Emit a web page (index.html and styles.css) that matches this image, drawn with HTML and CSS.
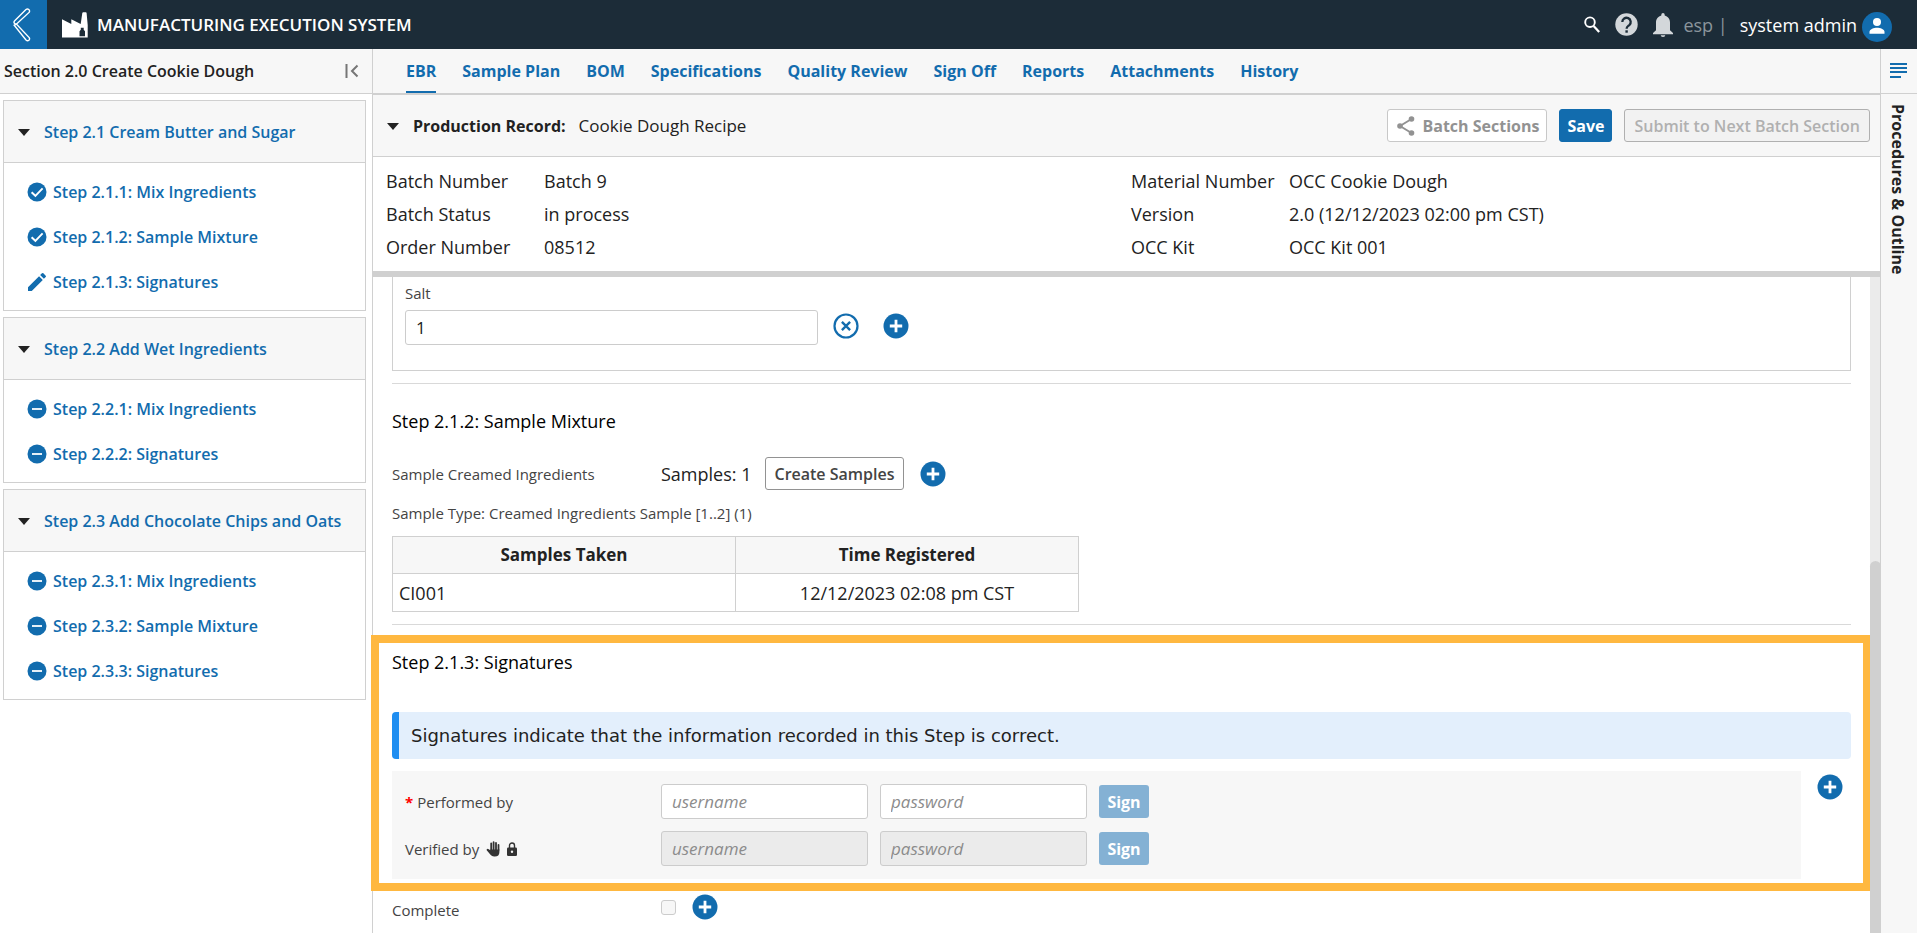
FILE: index.html
```html
<!DOCTYPE html>
<html lang="en">
<head>
<meta charset="utf-8">
<title>Manufacturing Execution System</title>
<link rel="stylesheet" href="styles.css">
</head>
<body>
<svg class="defs" width="0" height="0" aria-hidden="true">
  <symbol id="i-check" viewBox="0 0 20 20"><circle cx="10" cy="10" r="9.5" fill="currentColor"/><path d="M4.6 10.2 8.4 13.8 15.6 6.4" fill="none" stroke="#fff" stroke-width="1.9"/></symbol>
  <symbol id="i-minus" viewBox="0 0 20 20"><circle cx="10" cy="10" r="9.5" fill="currentColor"/><path d="M5 10h10" stroke="#fff" stroke-width="1.8"/></symbol>
  <symbol id="i-pencil" viewBox="2 2 20 20"><path fill="currentColor" d="M3 17.250V21h3.750L17.810 9.940l-3.750-3.750L3 17.250zM20.710 7.040a1 1 0 0 0 0-1.410l-2.340-2.340a1 1 0 0 0-1.410 0l-1.830 1.830 3.750 3.750 1.830-1.830z"/></symbol>
  <symbol id="i-plus" viewBox="0 0 26 26"><circle cx="13" cy="13" r="12.500" fill="currentColor"/><path d="M13 6.800v12.400M6.800 13h12.400" stroke="#fff" stroke-width="2.800"/></symbol>
  <symbol id="i-cancel" viewBox="0 0 26 26"><circle cx="13" cy="13" r="11.500" fill="none" stroke="currentColor" stroke-width="2.200"/><path d="M8.900 8.900l8.200 8.200M17.100 8.900l-8.200 8.200" stroke="currentColor" stroke-width="2.400"/></symbol>
  <symbol id="i-caret" viewBox="0 0 12 9"><path fill="currentColor" d="M0 2h12L6 9z"/></symbol>
</svg>
<header class="topbar">
  <button class="back" aria-label="Back"><svg width="18" height="34" viewBox="0 0 18 34" fill="none" stroke="#fff" stroke-width="1.400"><path d="M13 1.500 1.700 12.700Q.300 14.200 1.700 15.600L3.300 16.200 16.300 4.200Q17 2.500 15.800 1.500 14.400.400 13 1.500z"/><path d="M3.300 16.200 1.200 17.200 13 32Q14.500 33.300 15.900 32.200 17.100 31 16.200 29.600L4.300 17z"/></svg></button>
  <svg class="logo" width="26" height="26" viewBox="0 0 26 26"><path fill="#fff" d="M0 25.500V7.200L9.300 12V7.200L18.700 12 20.300 1Q20.500.300 21.200.300h2.600q.700 0 .8.700L25.700 13v12.500zM18.800 15.700v2l-1.300 1.500v5h5.500v-5l-1.300-1.500v-2z"/></svg>
  <h1 class="title">MANUFACTURING EXECUTION SYSTEM</h1>
  <div class="tools">
    <button class="tool" aria-label="Search"><svg width="16" height="17" viewBox="0 0 16 17" fill="none" stroke="#fff"><circle cx="6" cy="6.200" r="4.800" stroke-width="1.900"/><path d="M9.600 10l5.600 6" stroke-width="2.300"/></svg></button>
    <button class="tool" aria-label="Help"><svg width="23" height="23" viewBox="0 0 23 23"><circle cx="11.500" cy="11.500" r="11.200" fill="#d3d7da"/><path d="M7.300 9a4.200 4.200 0 1 1 7 3.100c-1.500 1.200-2.700 1.700-2.700 3.600" fill="none" stroke="#1c2c38" stroke-width="2.300"/><path d="M10.400 17.300h2.400v2.400h-2.400z" fill="#1c2c38"/></svg></button>
    <button class="tool" aria-label="Notifications"><svg width="20" height="24" viewBox="0 0 20 24"><path fill="#d3d7da" d="M10 0a1.700 1.700 0 0 1 1.700 1.700v.9c3.200.8 5.300 3.500 5.300 7V17.300l3 2.700v1.200H0V20l3-2.700V9.600c0-3.500 2.100-6.200 5.300-7v-.9A1.700 1.700 0 0 1 10 0zM7.700 22.200h4.600A2.300 1.800 0 0 1 7.700 22.200z"/></svg></button>
    <span class="locale">esp |</span>
    <button class="user">system admin
      <svg width="30" height="30" viewBox="0 0 30 30"><circle cx="15" cy="15" r="15" fill="#126cae"/><circle cx="15" cy="10" r="4" fill="#fff"/><path d="M7.500 21.800v-2c0-2.600 4.500-4.100 7.500-4.100s7.500 1.500 7.500 4.100v2z" fill="#fff"/></svg>
    </button>
  </div>
</header>

<div class="shell">
  <aside class="sidebar">
    <div class="side-head"><h2>Section 2.0 Create Cookie Dough</h2>
      <button class="plain" aria-label="Collapse sidebar"><svg width="14" height="14" viewBox="0 0 14 14" fill="none" stroke="#767676" stroke-width="2"><path d="M1.500 0v14M12.500 1.500 7 7l5.500 5.500"/></svg></button></div>
    <nav class="steps" aria-label="Steps">
      <section class="panel">
        <h3><svg class="caret"><use href="#i-caret"/></svg><a href="#">Step 2.1 Cream Butter and Sugar</a></h3>
        <ul>
          <li><svg class="ic"><use href="#i-check"/></svg><a href="#">Step 2.1.1: Mix Ingredients</a></li>
          <li><svg class="ic"><use href="#i-check"/></svg><a href="#">Step 2.1.2: Sample Mixture</a></li>
          <li><svg class="ic"><use href="#i-pencil"/></svg><a href="#">Step 2.1.3: Signatures</a></li>
        </ul>
      </section>
      <section class="panel">
        <h3><svg class="caret"><use href="#i-caret"/></svg><a href="#">Step 2.2 Add Wet Ingredients</a></h3>
        <ul>
          <li><svg class="ic"><use href="#i-minus"/></svg><a href="#">Step 2.2.1: Mix Ingredients</a></li>
          <li><svg class="ic"><use href="#i-minus"/></svg><a href="#">Step 2.2.2: Signatures</a></li>
        </ul>
      </section>
      <section class="panel">
        <h3><svg class="caret"><use href="#i-caret"/></svg><a href="#">Step 2.3 Add Chocolate Chips and Oats</a></h3>
        <ul>
          <li><svg class="ic"><use href="#i-minus"/></svg><a href="#">Step 2.3.1: Mix Ingredients</a></li>
          <li><svg class="ic"><use href="#i-minus"/></svg><a href="#">Step 2.3.2: Sample Mixture</a></li>
          <li><svg class="ic"><use href="#i-minus"/></svg><a href="#">Step 2.3.3: Signatures</a></li>
        </ul>
      </section>
    </nav>
  </aside>

  <main class="main">
    <nav class="tabs" aria-label="Record">
      <a class="active" href="#">EBR</a><a href="#">Sample Plan</a><a href="#">BOM</a><a href="#">Specifications</a><a href="#">Quality Review</a><a href="#">Sign Off</a><a href="#">Reports</a><a href="#">Attachments</a><a href="#">History</a>
    </nav>
    <div class="record-head">
      <svg class="caret"><use href="#i-caret"/></svg>
      <h2>Production Record:</h2><span class="recipe">Cookie Dough Recipe</span>
      <div class="actions">
        <button class="btn share"><svg width="18" height="20" viewBox="0 0 18 20" fill="#929292"><path d="M14.500 3 3 10l11.500 7" fill="none" stroke="#929292" stroke-width="1.900"/><circle cx="14.500" cy="3" r="2.800"/><circle cx="3" cy="10" r="2.800"/><circle cx="14.500" cy="17" r="2.800"/></svg>Batch Sections</button>
        <button class="btn primary">Save</button>
        <button class="btn submit" disabled>Submit to Next Batch Section</button>
      </div>
    </div>
    <div class="details">
      <dl><dt>Batch Number</dt><dd>Batch 9</dd><dt>Batch Status</dt><dd>in process</dd><dt>Order Number</dt><dd>08512</dd></dl>
      <dl><dt>Material Number</dt><dd>OCC Cookie Dough</dd><dt>Version</dt><dd>2.0 (12/12/2023 02:00 pm CST)</dd><dt>OCC Kit</dt><dd>OCC Kit 001</dd></dl>
    </div>
    <div class="scroller">
      <div class="content">
        <div class="ingredient">
          <label for="salt">Salt</label>
          <div class="salt-row">
            <input id="salt" class="field" type="text" value="1">
            <button class="round" aria-label="Not applicable"><svg><use href="#i-cancel"/></svg></button>
            <button class="round" aria-label="Add note to Salt"><svg><use href="#i-plus"/></svg></button>
          </div>
        </div>
        <section class="step sample">
          <h3>Step 2.1.2: Sample Mixture</h3>
          <div class="form-row">
            <span class="label">Sample Creamed Ingredients</span>
            <span class="count">Samples: 1</span>
            <button class="btn create">Create Samples</button>
            <button class="round" aria-label="Add note to samples"><svg><use href="#i-plus"/></svg></button>
          </div>
          <p class="type">Sample Type: Creamed Ingredients Sample [1..2] (1)</p>
          <table class="samples">
            <thead><tr><th>Samples Taken</th><th>Time Registered</th></tr></thead>
            <tbody><tr><td>CI001</td><td class="time">12/12/2023 02:08 pm CST</td></tr></tbody>
          </table>
        </section>
        <section class="step signatures">
          <h3>Step 2.1.3: Signatures</h3>
          <p class="notice">Signatures indicate that the information recorded in this Step is correct.</p>
          <div class="sign-area">
            <div class="sign-box">
              <div class="sign-row">
                <span class="label required"><span class="req">*</span> Performed by</span>
                <input class="field" type="text" placeholder="username" aria-label="Performed by username">
                <input class="field" type="password" placeholder="password" aria-label="Performed by password">
                <button class="btn sign" disabled>Sign</button>
              </div>
              <div class="sign-row">
                <span class="label">Verified by
                  <svg class="hand" width="14" height="16" viewBox="0 0 14 16" fill="none" stroke="#333" stroke-linecap="round"><path d="M5.200 9V2.300M7.600 9V1.200M10 9V2M12.500 9V4" stroke-width="1.800"/><path d="M4.300 8.500h9.100V11q0 4.600-4.600 4.600H8q-2.200 0-3.500-1.800L.700 9.200q-.500-.9.500-1.300.8-.2 1.500.3l1.600 1z" fill="#333" stroke="none"/></svg>
                  <svg width="10" height="14" viewBox="0 0 10 14"><path d="M2.500 6V3.500a2.500 2.500 0 0 1 5 0V6" fill="none" stroke="#333" stroke-width="1.400"/><rect y="5.500" width="10" height="8.500" rx="1.200" fill="#333"/><circle cx="5" cy="9.700" r="1.200" fill="#f7f7f7"/></svg>
                </span>
                <input class="field" type="text" placeholder="username" aria-label="Verified by username" disabled>
                <input class="field" type="password" placeholder="password" aria-label="Verified by password" disabled>
                <button class="btn sign" disabled>Sign</button>
              </div>
            </div>
            <button class="round" aria-label="Add note to signatures"><svg><use href="#i-plus"/></svg></button>
          </div>
        </section>
        <div class="complete">
          <label class="label" for="complete">Complete</label>
          <input id="complete" type="checkbox" disabled>
          <button class="round" aria-label="Add note to completion"><svg><use href="#i-plus"/></svg></button>
        </div>
      </div>
      <div class="track" aria-hidden="true"><div class="thumb"></div></div>
    </div>
  </main>

  <aside class="rail">
    <button class="rail-icon" aria-label="Open outline"><svg width="17" height="16" viewBox="0 0 17 16" stroke="#126cae" stroke-width="2"><path d="M0 1h17M0 5h17M0 9h17M0 14h11"/></svg></button>
    <span class="rail-text">Procedures &amp; Outline</span>
  </aside>
</div>
</body>
</html>
```
FILE: styles.css
```css
* { box-sizing: border-box; }
body {
  margin: 0;
  height: 100vh;
  display: flex;
  flex-direction: column;
  overflow: hidden;
  background: #fff;
  color: #222;
  font: 18px/24px "Open Sans", "Noto Sans", sans-serif;
}
h1, h2, h3, p, ul, dl, dd { margin: 0; padding: 0; }
h1, h2, h3 { font-size: 16px; font-weight: 600; }
a { color: #126cae; text-decoration: none; }
button, input { font: inherit; color: inherit; margin: 0; }
button { padding: 0; border: 0; background: none; }
svg { display: block; flex: none; }
.defs { position: absolute; }

.topbar { display: flex; align-items: center; height: 49px; flex: none; background: #1c2c38; color: #fff; }
.back { width: 47px; flex: none; height: 100%; padding-left: 13px; background: #126cae; }
.logo { margin-left: 15px; }
.title { margin-left: 9px; font-size: 17px; }
.tools { display: flex; align-items: center; margin-left: auto; padding-right: 25px; }
.tool { margin-right: 15px; }
.locale { color: #8b959c; margin-left: -5px; }
.user { display: flex; align-items: center; gap: 5px; margin-left: 12px; font-weight: 500; }
.user svg { margin-top: 4px; }

.shell { display: flex; flex: 1; min-height: 0; }
.sidebar { width: 373px; flex: none; border-right: 1px solid #d0d0d0; }
.side-head { display: flex; align-items: center; justify-content: space-between; height: 45px; padding: 0 13px 0 4px; background: #f7f7f7; border-bottom: 1px solid #d0d0d0; }
.steps { display: flex; flex-direction: column; gap: 6px; padding: 6px 6px 6px 3px; }
.panel { border: 1px solid #d0d0d0; }
.panel h3 { display: flex; align-items: center; gap: 14px; height: 62px; padding-left: 14px; background: #f7f7f7; border-bottom: 1px solid #d0d0d0; }
.caret { width: 12px; height: 9px; color: #222; }
.panel ul { list-style: none; padding: 6px 0 6px 23px; }
.panel li { display: flex; align-items: center; gap: 6px; height: 45px; font-size: 16px; font-weight: 600; }
.ic { width: 20px; height: 20px; color: #126cae; }

.main { flex: 1; min-width: 0; display: flex; flex-direction: column; }
.tabs { display: flex; gap: 26px; height: 46px; flex: none; padding-left: 33px; background: #f7f7f7; border-bottom: 2px solid #d0d0d0; font-size: 16px; font-weight: 700; }
.tabs a { padding-top: 10px; }
.tabs .active { border-bottom: 2px solid #126cae; }
.record-head { display: flex; align-items: center; height: 62px; flex: none; padding: 0 10px 0 14px; background: #f7f7f7; border-bottom: 1px solid #d0d0d0; font-size: 17px; }
.record-head h2 { margin-left: 14px; font-weight: 700; }
.recipe { margin-left: 13px; font-weight: 500; }
.actions { display: flex; gap: 12px; margin-left: auto; }
.btn { height: 33px; padding: 0 8px; border: 1px solid #929292; border-radius: 3px; background: #fff; font-size: 16px; font-weight: 600; white-space: nowrap; }
.share { display: flex; align-items: center; gap: 7px; padding: 0 7px 0 9px; color: #929292; border-color: #c8c8c8; font-weight: 700; }
.primary { padding: 0 7px; color: #fff; background: #126cae; border-color: #126cae; font-weight: 700; }
.submit { padding: 0 9px; color: #b0b0b0; background: #f2f2f2; border-color: #b0b0b0; }
.details { display: grid; grid-template-columns: 1fr 1fr; flex: none; padding: 8px 4px 7px 13px; border-bottom: 6px solid #d0d0d0; }
.details dl { display: grid; grid-template-columns: 158px 1fr; line-height: 33px; }

.scroller { display: flex; flex: 1; min-height: 0; }
.content { flex: 1; min-width: 0; padding: 0 19px; }
.track { width: 10px; background: #ebebeb; }
.thumb { width: 11px; height: 60%; margin-top: 284px; border-radius: 6px 6px 0 0; background: #d0d0d0; position: relative; }
.label, .ingredient label, .type { font-size: 15px; color: #444; }
.field { height: 35px; padding: 0 10px; border: 1px solid #ccc; border-radius: 3px; background: #fff; font-size: 17px; }
.field::placeholder { color: #8c8c8c; font-style: italic; opacity: 1; }
.field:disabled { background: #ebebeb; }
.round { width: 26px; height: 26px; color: #126cae; flex: none; }
.round svg { width: 26px; height: 26px; }
.ingredient { height: 94px; padding: 4px 12px 0; border: 1px solid #d0d0d0; border-top: 0; }
.ingredient label { display: block; height: 29px; }
.salt-row { display: flex; align-items: flex-start; }
.salt-row .field { width: 413px; margin-right: 15px; }
.salt-row .round { margin-right: 24px; margin-top: 3px; }
.step h3 { font-weight: 400; color: #000; font-size: 18px; }
.sample { margin-top: 12px; padding: 25px 0 12px; border-top: 1px solid #d9d9d9; border-bottom: 1px solid #d9d9d9; }
.form-row { display: flex; align-items: center; height: 33px; margin-top: 24px; }
.form-row .label { width: 269px; }
.form-row .btn { margin: 0 16px 0 14px; color: #444; }
.type { margin-top: 11px; }
.samples { width: 687px; margin-top: 11px; border-collapse: collapse; table-layout: fixed; }
.samples th, .samples td { height: 38px; padding: 0 6px; border: 1px solid #d0d0d0; }
.samples th { height: 37px; background: #f7f7f7; font-weight: 700; font-size: 17px; }
.samples .time { text-align: center; }
.signatures { position: relative; padding-top: 25px; }
.signatures::after { content: ""; position: absolute; inset: 10px -20px -12px -21px; border: 8px solid #ffb840; pointer-events: none; }
.notice { margin-top: 38px; padding: 12px 12px 11px; border-left: 7px solid #1f8ef1; border-radius: 4px; background: #e3effc; font-family: "DejaVu Sans", sans-serif; }
.sign-area { display: flex; align-items: flex-start; justify-content: space-between; margin-top: 12px; padding-right: 8px; }
.sign-box { flex: 1; margin-right: 16px; padding: 13px; display: grid; gap: 12px; background: #f7f7f7; }
.sign-row { display: flex; align-items: center; }
.sign-row .label { display: flex; align-items: center; gap: 7px; width: 256px; }
.sign-row .required { gap: 4px; }
.sign-row .field { width: 207px; margin-right: 12px; }
.req { color: #f00; font-weight: 700; }
.sign { width: 50px; color: #fff; background: #84b1d4; border: 0; font-weight: 700; }
.sign-area > .round { margin-top: 3px; }
.complete { display: flex; align-items: center; margin-top: 13px; }
.complete .label { width: 269px; padding-top: 6px; }
.complete input { appearance: none; width: 15px; height: 15px; margin-right: 16px; border: 1px solid #ccc; border-radius: 3px; background: #f7f7f7; }

.rail { width: 37px; flex: none; display: flex; flex-direction: column; background: #f7f7f7; border-left: 1px solid #d0d0d0; }
.rail-icon { height: 45px; padding-left: 9px; border-bottom: 1px solid #d0d0d0; }
.rail-text { writing-mode: vertical-rl; align-self: flex-start; margin: 10px 0 0 5px; font-size: 16px; font-weight: 700; }
```
